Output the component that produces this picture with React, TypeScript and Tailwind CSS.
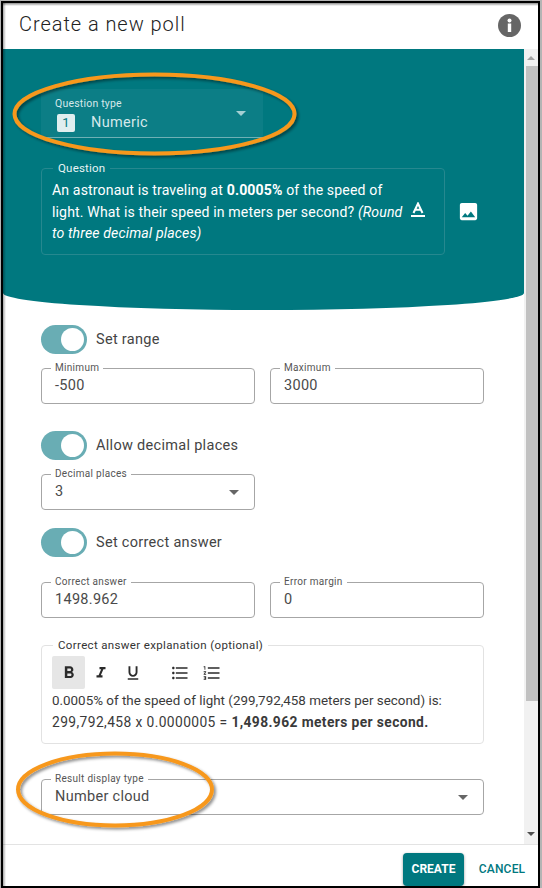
import React from "react";
import { MdImage, MdFormatBold, MdFormatItalic, MdFormatUnderlined, MdFormatListBulleted, MdFormatListNumbered } from "react-icons/md";

const font = { fontFamily: '"Roboto", "Open Sans", sans-serif' };

function Toggle({ label }: { label: string }) {
  return (
    <div className="flex items-center h-[29px]">
      <div className="w-[46px] h-[29px] rounded-full bg-[#69adb4] flex items-center justify-end pr-[3px]">
        <div className="w-[23px] h-[23px] rounded-full bg-white" />
      </div>
      <span className="ml-[9px] text-[14.5px] tracking-[0.3px] text-[#444]">{label}</span>
    </div>
  );
}

function Field({ label, value, arrow, className }: { label: string; value: string; arrow?: boolean; className?: string }) {
  return (
    <fieldset className={`h-[41px] border border-[#a6a6a6] rounded-[4px] px-[9px] flex-none min-w-0 relative ${className ?? ""}`}>
      <legend className="text-[10px] leading-[10px] px-[4px] text-[#555] tracking-[0.3px]">{label}</legend>
      <div className="flex items-center justify-between h-[22px] mt-[2px] pl-[4px]">
        <span className="text-[14.5px] tracking-[0.3px] text-[#4a4a4a]">{value}</span>
        {arrow && <span className="w-0 h-0 border-l-[5px] border-r-[5px] border-t-[5px] border-l-transparent border-r-transparent border-t-[#666] mr-[6px]" />}
      </div>
    </fieldset>
  );
}

export default function App() {
  return (
    <div className="relative w-[542px] h-[888px] bg-[#b4b4b4] overflow-hidden" style={font}>
      <div className="w-[539px] h-[887px] ml-[1px] mt-[1px] border-2 border-black">
        <div className="relative w-[535px] h-[883px] bg-white flex flex-col">
          {/* header */}
          <header className="h-[46px] flex-none flex items-center justify-between pl-[16px] pr-[17px]">
            <h1 className="text-[20px] tracking-[0.95px] text-[#222] font-light -mt-[4px]">Create a new poll</h1>
            <svg width="23" height="23" viewBox="0 0 23 23" className="mt-[-1px]">
              <circle cx="11.5" cy="11.5" r="11.5" fill="#666" />
              <rect x="9.8" y="9.5" width="3.4" height="8.5" fill="#fff" />
              <circle cx="11.5" cy="6.5" r="2" fill="#fff" />
            </svg>
          </header>

          {/* body */}
          <div className="flex-1 flex min-h-0">
            <main className="flex-1 min-w-0 overflow-hidden">
              <section className="h-[261px] bg-[#00787f] rounded-b-[50%_17px] pt-[40px] pl-[38px]">
                <div className="relative w-[222px] h-[49px] bg-[#0c7e86] border-b border-[#6fb0b5] pl-[14px] pt-[9px]">
                  <div className="text-[10.5px] leading-[12px] text-[#d5e8ea] tracking-[0.2px]">Question type</div>
                  <div className="flex items-center mt-[2px]">
                    <span className="w-[18px] h-[18px] ml-[2px] rounded-[2px] bg-[#e0eeef] text-[#00787f] text-[13px] leading-[18px] text-center">1</span>
                    <span className="ml-[16px] text-[14.5px] tracking-[0.3px] text-[#d5e8ea]">Numeric</span>
                  </div>
                  <span className="absolute right-[17px] top-[22px] w-0 h-0 border-l-[5px] border-r-[5px] border-t-[5px] border-l-transparent border-r-transparent border-t-[#a5d0d3]" />
                </div>

                <div className="flex items-center mt-[24px]">
                  <fieldset className="w-[404px] h-[93px] border border-[#26888f] rounded-[4px] pl-[10px] pr-[4px] relative">
                    <legend className="ml-[1px] px-[5px] text-[11.5px] leading-[12px] text-[#e8f3f4] tracking-[0.2px]">Question</legend>
                    <p className="text-[14.1px] leading-[21.5px] text-white tracking-[0.13px] mt-[6px] whitespace-nowrap">
                      An astronaut is traveling at <b>0.0005%</b> of the speed of<br />light. What is their speed in meters per second? <i>(Round</i><br /><i>to three decimal places)</i>
                    </p>
                    <svg width="14" height="15" viewBox="0 0 14 15" className="absolute right-[19px] top-[28px]">
                      <path d="M2.5 11 L7 1.5 L11.5 11 M4.3 7.8 H9.7" fill="none" stroke="#fff" strokeWidth="2" />
                      <rect x="0" y="13" width="14" height="2" fill="#fff" />
                    </svg>
                  </fieldset>
                  <MdImage className="ml-[12px] mt-[6px] text-white" size={23} />
                </div>
              </section>

              <section className="pl-[38px] w-[481px]">
                <div className="mt-[15px]"><Toggle label="Set range" /></div>
                <div className="flex justify-between mt-[9px]">
                  <Field label="Minimum" value="-500" className="w-[214px]" />
                  <Field label="Maximum" value="3000" className="w-[214px]" />
                </div>
                <div className="mt-[27px]"><Toggle label="Allow decimal places" /></div>
                <div className="mt-[9px]"><Field label="Decimal places" value="3" arrow className="w-[214px]" /></div>
                <div className="mt-[18px]"><Toggle label="Set correct answer" /></div>
                <div className="flex justify-between mt-[20px]">
                  <Field label="Correct answer" value="1498.962" className="w-[214px]" />
                  <Field label="Error margin" value="0" className="w-[214px]" />
                </div>

                <fieldset className="mt-[21px] h-[105px] border border-[#e2e2e2] rounded-[4px] pl-[10px]">
                  <legend className="ml-[1px] px-[5px] text-[11.5px] leading-[12px] text-[#333] tracking-[0.35px]">Correct answer explanation (optional)</legend>
                  <div className="flex items-center h-[33px] text-[#2b2b2b] mt-[5px]">
                    <span className="w-[33px] h-[33px] bg-[#e6e6e6] rounded-[2px] flex items-center justify-center"><MdFormatBold size={20} /></span>
                    <span className="w-[32px] flex justify-center"><MdFormatItalic size={18} /></span>
                    <span className="w-[32px] flex justify-center"><MdFormatUnderlined size={18} /></span>
                    <span className="w-[32px] ml-[15px] flex justify-center"><MdFormatListBulleted size={20} /></span>
                    <span className="w-[32px] flex justify-center"><MdFormatListNumbered size={20} /></span>
                  </div>
                  <p className="leading-[21px] text-[#3a3a3a] mt-0 whitespace-nowrap">
                    <span className="text-[13.4px]">0.0005% of the speed of light (299,792,458 meters per second) is:</span><br />
                    <span className="text-[13.8px] tracking-[0.4px]">299,792,458 x 0.0000005 = <b>1,498.962 meters per second.</b></span>
                  </p>
                </fieldset>

                <div className="mt-[30px]"><Field label="Result display type" value="Number cloud" arrow className="w-[443px]" /></div>
              </section>
            </main>

            {/* scrollbar */}
            <div className="w-[14px] flex-none bg-[#f1f1f1] flex flex-col items-end">
              <div className="h-[17px] w-full flex-none flex items-center justify-center">
                <span className="w-0 h-0 border-l-[4px] border-r-[4px] border-b-[4px] border-l-transparent border-r-transparent border-b-[#a3a3a3]" />
              </div>
              <div className="w-[12px] h-[635px] flex-none bg-[#c1c1c1]" />
              <div className="flex-1" />
              <div className="h-[20px] w-full flex-none flex items-center justify-center">
                <span className="w-0 h-0 border-l-[4px] border-r-[4px] border-t-[4px] border-l-transparent border-r-transparent border-t-[#505050]" />
              </div>
            </div>
          </div>

          {/* footer */}
          <footer className="h-[42px] flex-none border-t border-[#e3e3e3] flex items-center justify-end pr-[12px] pt-[7px]">
            <button className="w-[61px] h-[33px] rounded-[4px] bg-[#00787f] text-white text-[12px] font-bold shadow-[0_1px_3px_rgba(0,0,0,0.4)]">CREATE</button>
            <button className="ml-[14px] w-[48px] text-[#00787f] text-[12px] font-medium tracking-[0.2px]">CANCEL</button>
          </footer>

          {/* window edge shadow */}
          <div className="absolute left-0 top-0 w-full h-[3px] bg-gradient-to-b from-[rgba(0,0,0,0.45)] to-transparent pointer-events-none" />
          <div className="absolute left-0 top-0 w-[3px] h-full bg-gradient-to-r from-[rgba(0,0,0,0.35)] to-transparent pointer-events-none" />
        </div>
      </div>

      {/* callout ellipses */}
      <svg className="absolute left-0 top-0 pointer-events-none" width="542" height="888">
        <defs>
          <filter id="s" x="-10%" y="-20%" width="120%" height="140%">
            <feDropShadow dx="2" dy="2" stdDeviation="1.5" floodColor="#000" floodOpacity="0.45" />
          </filter>
        </defs>
        <ellipse cx="154.5" cy="114" rx="140" ry="39.5" fill="none" stroke="#f7981d" strokeWidth="4" filter="url(#s)" />
        <ellipse cx="115" cy="789.5" rx="97" ry="36" fill="none" stroke="#f7981d" strokeWidth="4" filter="url(#s)" />
      </svg>
    </div>
  );
}
